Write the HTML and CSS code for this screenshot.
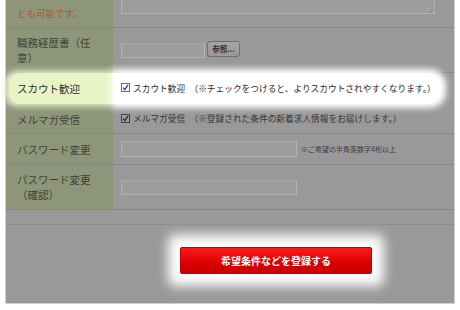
FILE: index.html
```html
<!DOCTYPE html>
<html lang="ja">
<head>
<meta charset="utf-8">
<link rel="stylesheet" href="styles.css">
</head>
<body>
<div class="frame">
  <div class="row r1">
    <div class="label orange">とも可能です。</div>
    <div class="val top">
      <div class="textarea">
        <svg class="grip" width="7" height="7" viewBox="0 0 7 7"><g fill="#b8b8b8"><rect x="5" y="0" width="1" height="1"/><rect x="3" y="2" width="1" height="1"/><rect x="5" y="2" width="1" height="1"/><rect x="1" y="4" width="1" height="1"/><rect x="3" y="4" width="1" height="1"/><rect x="5" y="4" width="1" height="1"/></g><g fill="#7a7a7a"><rect x="6" y="1" width="1" height="1"/><rect x="4" y="3" width="1" height="1"/><rect x="6" y="3" width="1" height="1"/><rect x="2" y="5" width="1" height="1"/><rect x="4" y="5" width="1" height="1"/><rect x="6" y="5" width="1" height="1"/></g></svg>
      </div>
    </div>
  </div>
  <div class="row r2">
    <div class="label">職務経歴書（任意）</div>
    <div class="val">
      <div class="input file"></div>
      <div class="btn-ref">参照...</div>
    </div>
  </div>
  <div class="row r3 hl">
    <div class="label">スカウト歓迎</div>
    <div class="val">
      <span class="check"><svg width="9" height="9" viewBox="0 0 9 9"><rect x="0.5" y="0.5" width="8" height="8" fill="#fff" stroke="#6d6d6d"/><path d="M2 4.6 L3.8 6.6 L7 1.8" fill="none" stroke="#2a46b8" stroke-width="1.4"/></svg></span>
      <span class="txt">スカウト歓迎　（※チェックをつけると、よりスカウトされやすくなります。）</span>
    </div>
  </div>
  <div class="row r4">
    <div class="label">メルマガ受信</div>
    <div class="val">
      <span class="check"><svg width="9" height="9" viewBox="0 0 9 9"><rect x="0.5" y="0.5" width="8" height="8" fill="#9c9c9c" stroke="#444"/><path d="M2 4.6 L3.8 6.6 L7 1.8" fill="none" stroke="#1c2a6a" stroke-width="1.4"/></svg></span>
      <span class="txt">メルマガ受信　（※登録された条件の新着求人情報をお届けします。）</span>
    </div>
  </div>
  <div class="row r5">
    <div class="label">パスワード変更</div>
    <div class="val">
      <div class="input pw"></div>
      <span class="note">※ご希望の半角英数字4桁以上</span>
    </div>
  </div>
  <div class="row r6">
    <div class="label">パスワード変更<br>（確認）</div>
    <div class="val">
      <div class="input pw2"></div>
    </div>
  </div>
  <div class="spacer"></div>
  <div class="submit-area">
    <div class="submit">希望条件などを登録する</div>
  </div>
</div>
</body>
</html>
```
FILE: styles.css
```css
html, body {
  margin: 0;
  padding: 0;
  background: #fff;
}
body {
  font-family: "Noto Sans CJK JP", "Noto Sans", sans-serif;
  width: 460px;
  height: 310px;
  overflow: hidden;
}
.frame {
  margin-left: 5px;
  width: 448px;
  background: #999999;
  border-left: 1px solid #cfcfcf;
  border-right: 1px solid #cfcfcf;
  border-bottom: 1px solid #cfcfcf;
}
.row {
  display: flex;
  border-bottom: 1px solid #878787;
}
.label {
  width: 107px;
  box-sizing: border-box;
  flex: none;
  background: #8e9679;
  color: #3e4238;
  font-size: 10.5px;
  line-height: 15px;
  padding: 0 14px 0 11px;
  display: flex;
  align-items: center;
}
.val {
  flex: 1;
  display: flex;
  align-items: center;
  padding-left: 8px;
  color: #363636;
}
.val.top { align-items: flex-start; }
.r1 { height: 27px; }
.r2 { height: 44px; }
.r3 { height: 31px; }
.r4 { height: 28px; }
.r5 { height: 30px; }
.r6 { height: 44px; }
.orange {
  color: #b0552c;
  font-size: 9.5px;
}
.textarea {
  width: 312px;
  height: 13px;
  border: 1px solid #b2b2b2;
  border-top: none;
  background: #9d9d9d;
  position: relative;
}
.grip {
  position: absolute;
  right: 2px;
  bottom: 0px;
}
.input {
  background: #9d9d9d;
  border: 1px solid #b3b3b3;
  border-top-color: #a8a8a8;
  box-sizing: border-box;
}
.file { width: 84px; height: 15px; }
.btn-ref {
  margin-left: 2px;
  width: 33px;
  height: 16px;
  box-sizing: border-box;
  border: 1px solid #6e6e6e;
  border-radius: 3px;
  background: linear-gradient(#a6a6a6, #979797);
  font-size: 7.5px;
  line-height: 14px;
  text-align: center;
  color: #2e2e2e;
  font-weight: bold;
  margin-top: -2px;
}
.pw { width: 176px; height: 16px; }
.pw2 { width: 176px; height: 15px; }
.note {
  margin-left: 4px;
  font-size: 7px;
  color: #3c3c3c;
}
.check {
  display: inline-flex;
  width: 9px;
  height: 9px;
  margin-right: 3px;
  margin-top: -2px;
}
.txt {
  font-size: 8.7px;
  line-height: 12px;
  white-space: nowrap;
}
.hl {
  position: relative;
  z-index: 1;
  border-bottom-color: transparent;
}
.hl .label {
  background: #e9f4c6;
  color: #2e2e2e;
  width: 103px;
  margin-left: 4px;
  padding-left: 7px;
  border-radius: 10px 0 0 10px;
  box-shadow: -3px 0 6px 2px #e9f4c6;
}
.hl .val {
  background: #fff;
  margin-right: 14px;
  border-radius: 0 12px 12px 0;
  box-shadow: 2px 0 6px 4px #fff;
  color: #2a2a2a;
}
.spacer {
  height: 14px;
  border-bottom: 1px solid #8c8c8c;
}
.submit-area {
  height: 78px;
  padding-left: 174px;
  padding-top: 22px;
  box-sizing: border-box;
}
.submit {
  width: 192px;
  height: 27px;
  box-sizing: border-box;
  border: 1px solid #c40000;
  border-radius: 2px;
  background: linear-gradient(#ff1a1a, #d90000 60%, #c80000);
  color: #fff;
  font-weight: bold;
  font-size: 10px;
  line-height: 25px;
  text-align: center;
  box-shadow: 0 0 0 1px #fff, 0 0 12px 12px #fff;
}
```
